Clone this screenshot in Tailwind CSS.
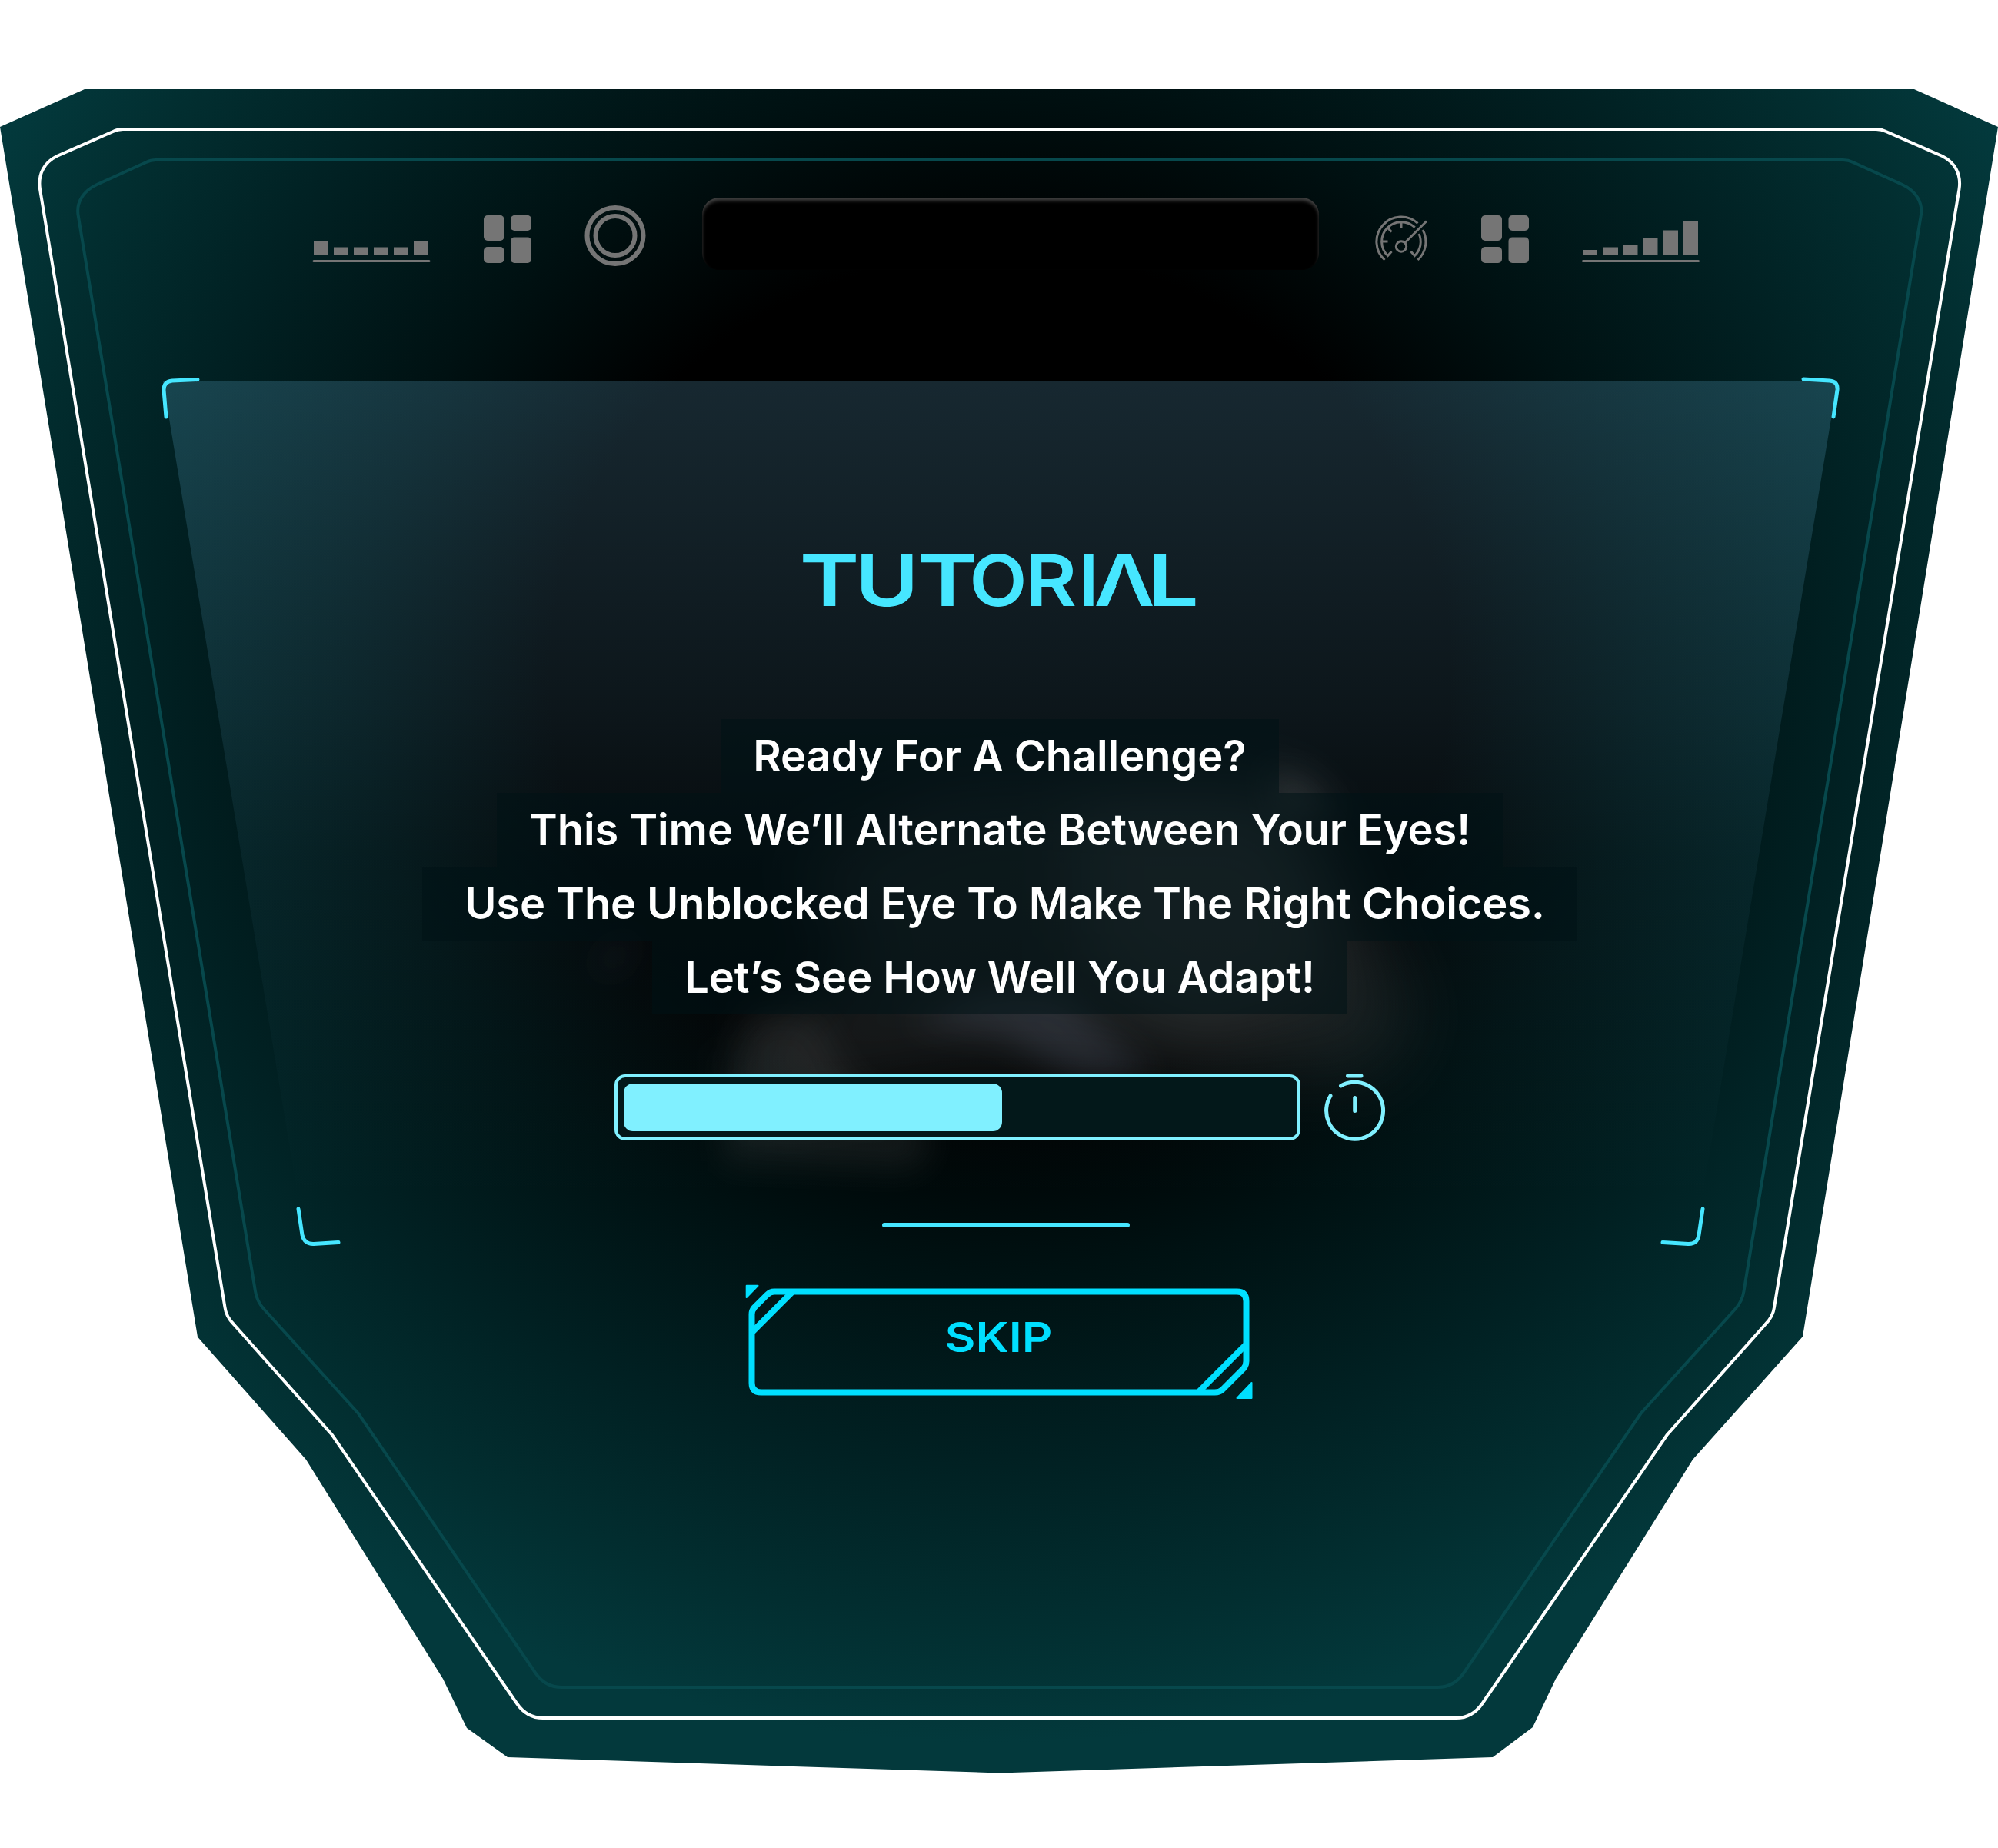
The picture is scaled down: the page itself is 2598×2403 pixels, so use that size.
<!DOCTYPE html>
<html lang="en">
<head>
<meta charset="utf-8">
<title>Tutorial</title>
<script src="https://cdn.jsdelivr.net/npm/@tailwindcss/browser@4"></script>
</head>
<body class="bg-white">
<main class="relative w-[2598px] h-[2403px] overflow-hidden font-['Inter',sans-serif]">

  <!-- Cockpit frame -->
  <svg class="absolute inset-0 w-full h-full" viewBox="0 0 2598 2403" fill="none" aria-hidden="true">
    <defs>
      <radialGradient id="shell" gradientUnits="userSpaceOnUse" cx="0" cy="0" r="1" gradientTransform="translate(1300 875) scale(1540 1435)">
        <stop offset="0" stop-color="#000000"/>
        <stop offset=".38" stop-color="#000000"/>
        <stop offset=".54" stop-color="#001112"/>
        <stop offset=".72" stop-color="#012123"/>
        <stop offset=".86" stop-color="#022e30"/>
        <stop offset=".97" stop-color="#03393c"/>
      </radialGradient>
      <linearGradient id="glass" x1="0" y1="496" x2="0" y2="1560" gradientUnits="userSpaceOnUse">
        <stop offset="0" stop-color="#78d2ff" stop-opacity=".19"/>
        <stop offset=".4" stop-color="#78d2ff" stop-opacity=".105"/>
        <stop offset=".58" stop-color="#78d2ff" stop-opacity=".055"/>
        <stop offset="1" stop-color="#78d2ff" stop-opacity="0"/>
      </linearGradient>
      <filter id="soft" x="-60%" y="-60%" width="220%" height="220%"><feGaussianBlur stdDeviation="20"/></filter>
      <filter id="softer" x="-60%" y="-60%" width="220%" height="220%"><feGaussianBlur stdDeviation="45"/></filter>
    </defs>
    <path fill="url(#shell)" d="M110 116H2489L2598 165L2344 1738L2201 1898L2023 2183L1993 2246L1941 2285L1300 2305.500L660 2285L607 2247L576 2183L398 1898L257 1738.500L0 165Z"/>
    <g id="half">
      <path stroke="#07484c" stroke-width="4" d="M1300 208H203Q196 208 190 211L126 240C109 248 98 263 102 282L332 1679Q334 1692 343 1702L466 1838L696 2175Q709 2194 730 2194H1300"/>
      <path stroke="#fff" stroke-width="4" d="M1300 168H160Q153 168 147 171L74 203C58 211 49 226 52 246L292.500 1700Q294 1712 304 1722L432 1866L672 2215Q685 2234 706 2234H1300"/>
    </g>
    <use href="#half" transform="translate(2599.500 0) scale(-1 1)"/>

    <!-- Glass panel and the hazy shape behind it -->
    <path fill="url(#glass)" d="M212 496H2389L2213 1560H388Z"/>
    <g filter="url(#softer)">
      <path fill="#9aa0a4" fill-opacity=".13" d="M1040 1120L1240 1030L1640 1030L1740 1120L1840 1330L1780 1400L1500 1390L1230 1390L980 1440L980 1360L1120 1260Z"/>
      <path fill="#a0a8a8" fill-opacity=".12" d="M1400 1030H1690L1740 1280L1560 1360L1400 1250Z"/>
    </g>
    <g filter="url(#soft)">
      <path fill="#a8a8a8" fill-opacity=".11" d="M980 1320H1060L1100 1400L1215 1480L1190 1520L940 1510L950 1380Z"/>
      <path fill="#98a4c8" fill-opacity=".15" d="M1180 1330L1280 1290L1380 1290L1500 1400H1400L1300 1345Z"/>
      <path fill="#a8a8a8" fill-opacity=".14" d="M1650 1000L1700 1010L1740 1060L1660 1060Z"/>
      <path fill="#8080b0" fill-opacity=".14" d="M770 1260L830 1210L800 1260Z"/>
    </g>

    <!-- Panel corner marks -->
    <g stroke="#46e6ff" stroke-width="5" stroke-linecap="round" stroke-linejoin="round">
      <path d="M257 493.500L224 495Q213 496 213 507L216 542"/>
      <path d="M2345 493L2379 495Q2390 496 2389 507L2384 542"/>
      <path d="M388 1572L393 1606Q396 1618 408 1617.500L440 1615.500"/>
      <path d="M2214 1572L2209 1606Q2207 1618 2195 1617.500L2162 1615.500"/>
    </g>
  </svg>

  <header class="relative flex items-end h-[351px] pl-[406px]">
    <svg class="w-[154px] h-[29px] mb-[10px]" viewBox="406 312 154 29" fill="#757575">
      <path d="M408 313.500h19V332h-19zM434 321.500h19V332h-19zM460 321.500h19V332h-19zM486 321.500h19V332h-19zM512 321.500h19V332h-19zM538 313.500h19V332h-19z"/>
      <rect x="406.500" y="338" width="153" height="3" rx="1.500"/>
    </svg>
    <svg class="w-[62px] h-[62px] ml-[69px] mb-[9px]" viewBox="0 0 62 62" fill="#757575">
      <rect width="26.500" height="33" rx="5"/><rect x="35" width="27" height="20" rx="5"/>
      <rect y="41" width="26.500" height="21" rx="5"/><rect x="35" y="28.500" width="27" height="33.500" rx="5"/>
    </svg>
    <svg class="w-[80px] h-[80px] ml-[69px] mb-[5px]" viewBox="0 0 80 80" fill="none" stroke="#757575" stroke-width="6">
      <circle cx="40" cy="40.500" r="36.500"/><circle cx="40" cy="40.500" r="25.500"/>
    </svg>
    <div class="w-[802px] h-[94px] ml-[73px] rounded-[22px] bg-black shadow-[inset_0_4px_4px_rgba(255,255,255,0.25)]"></div>
    <svg class="w-[68px] h-[62px] ml-[73px] mb-[9px]" viewBox="1788 280 68 62" fill="none" stroke="#757575" stroke-width="3">
      <path d="M1800.500 338A32 32 0 1 1 1843.500 290.300M1850 299A32 32 0 0 1 1843.500 338"/>
      <path d="M1809.500 327L1804.500 332.500A25 25 0 1 1 1839.700 295.700M1845 304A25 25 0 0 1 1839.500 332.500L1834.500 327"/>
      <path d="M1822 288V296M1797 314H1804.500M1804.500 296.500L1809.500 301.500M1827 315.500L1855 287.500"/>
      <circle cx="1822" cy="320.500" r="6.700"/>
    </svg>
    <svg class="w-[62px] h-[62px] ml-[70px] mb-[9px]" viewBox="0 0 62 62" fill="#757575">
      <rect width="27" height="33" rx="5"/><rect x="35.500" width="26.500" height="20" rx="5"/>
      <rect y="41" width="27" height="21" rx="5"/><rect x="35.500" y="28.500" width="26.500" height="33.500" rx="5"/>
    </svg>
    <svg class="w-[154px] h-[54px] ml-[69px] mb-[10px]" viewBox="2057 287 154 54" fill="#757575">
      <path d="M2058 325h19v7h-19zM2084 321.500h20V332h-20zM2110.500 318h19v14h-19zM2137 309.500h18.500V332h-18.500zM2162.500 299.500h19.500V332h-19.500zM2189 287.500h19V332h-19z"/>
      <rect x="2057" y="338" width="153" height="3" rx="1.500"/>
    </svg>
  </header>

  <section class="relative flex flex-col items-center pl-[2px]">
    <svg class="w-[540px] h-[120px] mt-[344px]" viewBox="1030 695 540 120" role="img" aria-label="Tutorial">
      <!-- Keeps the A open, without its crossbar -->
      <clipPath id="openA"><path clip-rule="evenodd" d="M1030 695H1570V815H1030ZM1462 738L1439 791H1485Z"/></clipPath>
      <g clip-path="url(#openA)">
        <text class="font-['Inter',sans-serif] font-semibold text-[92.500px]" fill="#46e6ff" y="788"><tspan x="1039.500" textLength="78" lengthAdjust="spacingAndGlyphs">T</tspan><tspan x="1112" textLength="82.500" lengthAdjust="spacingAndGlyphs">U</tspan><tspan x="1193" textLength="78" lengthAdjust="spacingAndGlyphs">T</tspan><tspan x="1260.500" textLength="75" lengthAdjust="spacingAndGlyphs">O</tspan><tspan x="1333.500" textLength="66.600" lengthAdjust="spacingAndGlyphs">R</tspan><tspan x="1402.500" textLength="26" lengthAdjust="spacingAndGlyphs">I</tspan><tspan x="1422.500" textLength="79" lengthAdjust="spacingAndGlyphs">A</tspan><tspan x="1492" textLength="67" lengthAdjust="spacingAndGlyphs">L</tspan></text>
      </g>
    </svg>

    <div class="mt-[120px] flex flex-col items-center text-[56px] leading-[96px] tracking-[-0.1px] font-semibold text-white whitespace-nowrap">
      <p class="px-[42px] bg-[#001315]/55">Ready For A Challenge?</p>
      <p class="px-[42px] bg-[#001315]/55">This Time We’ll Alternate Between Your Eyes!</p>
      <p class="pl-[55px] pr-[42px] bg-[#001315]/55">Use The Unblocked Eye To Make The Right Choices.</p>
      <p class="px-[42px] bg-[#001315]/55">Let’s See How Well You Adapt!</p>
    </div>

    <div class="mt-[76px] flex items-center gap-[31px] pl-[1px]">
      <div class="w-[892px] h-[86px] rounded-[14px] border-4 border-[#80f0ff] bg-[#03181a] p-[8px]">
        <div class="h-full w-[492px] rounded-[12px] bg-[#80f0ff]"></div>
      </div>
      <svg class="w-[80px] h-[90px]" viewBox="1722 1395 80 90" fill="none" stroke="#80f0ff" stroke-width="5" stroke-linecap="round">
        <path d="M1743.500 1412A37 37 0 1 1 1730 1425M1752.500 1399H1770M1761.700 1427.500V1444.500"/>
      </svg>
    </div>

    <div class="ml-[15px] mt-[105px] w-[322px] h-[6px] rounded-full bg-[#46e6ff]"></div>

    <button class="relative mt-[74px] mr-[3px] flex w-[660px] h-[150px] items-center justify-center">
      <svg class="absolute inset-0 w-full h-full" viewBox="968.500 1670 660 150" fill="none" stroke="#00dfff" stroke-width="8" aria-hidden="true">
        <path d="M1006 1679.500H1608Q1620 1679.500 1620 1692V1770Q1620 1776 1616.500 1779.500L1589 1807Q1585.500 1810.500 1579 1810.500H989Q977 1810.500 977 1798V1709Q977 1704 980.500 1700L997 1683.500Q1001 1679.500 1006 1679.500Z"/>
        <path d="M978 1731.700L1030 1679.700M1619 1749L1558 1810"/>
        <path fill="#00dfff" stroke-width="2" stroke-linejoin="round" d="M970.200 1671.700H985L970.200 1687ZM1627 1798V1818H1608Z"/>
      </svg>
      <svg class="relative w-[160px] h-[90px]" viewBox="1218.500 1700 160 90">
        <text class="font-['Inter',sans-serif] font-semibold text-[54px]" fill="#00dfff" x="1228" y="1758" textLength="140" lengthAdjust="spacingAndGlyphs">SKIP</text>
      </svg>
    </button>
  </section>
</main>
</body>
</html>
